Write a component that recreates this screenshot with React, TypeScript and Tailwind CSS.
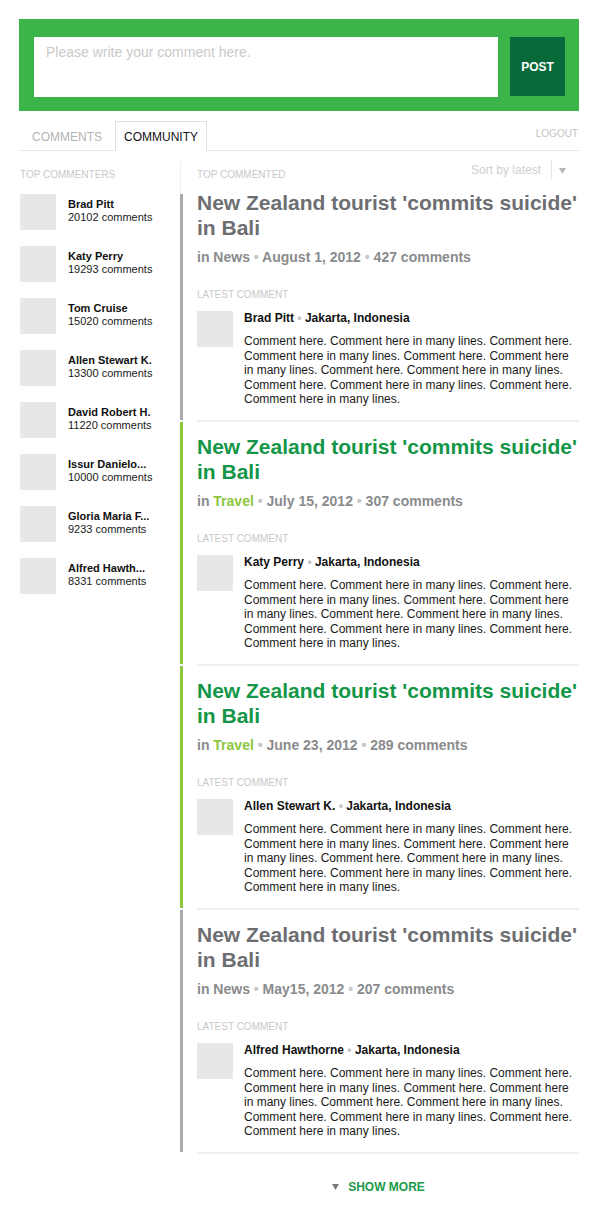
import React from "react";

const commenters = [
  { name: "Brad Pitt", count: "20102 comments" },
  { name: "Katy Perry", count: "19293 comments" },
  { name: "Tom Cruise", count: "15020 comments" },
  { name: "Allen Stewart K.", count: "13300 comments" },
  { name: "David Robert H.", count: "11220 comments" },
  { name: "Issur Danielo...", count: "10000 comments" },
  { name: "Gloria Maria F...", count: "9233 comments" },
  { name: "Alfred Hawth...", count: "8331 comments" },
];

type Article = {
  green: boolean;
  category: string;
  date: string;
  comments: string;
  author: string;
};

const articles: Article[] = [
  { green: false, category: "News", date: "August 1, 2012", comments: "427 comments", author: "Brad Pitt" },
  { green: true, category: "Travel", date: "July 15, 2012", comments: "307 comments", author: "Katy Perry" },
  { green: true, category: "Travel", date: "June 23, 2012", comments: "289 comments", author: "Allen Stewart K." },
  { green: false, category: "News", date: "May15, 2012", comments: "207 comments", author: "Alfred Hawthorne" },
];

const commentText = Array(6).fill("Comment here. Comment here in many lines.").join(" ");

function Dot() {
  return <span className="text-[#c8c8c8]"> • </span>;
}

function ArticleBlock({ a, first }: { a: Article; first: boolean }) {
  return (
    <>
      <div className="flex">
        <div className={`w-[3px] shrink-0 ${a.green ? "bg-[#8dc63f]" : "bg-[#a7a9ac]"}`} />
        <div className={`flex-1 pl-[14px] pb-[13.5px] ${first ? "pt-0" : "pt-[12px]"}`}>
          <h2
            className={`text-[21px] leading-[25px] font-bold ${first ? "-mt-[4px]" : ""} ${
              a.green ? "text-[#139647]" : "text-[#6d6e71]"
            }`}
          >
            New Zealand tourist 'commits suicide' in Bali
          </h2>
          <div className="mt-[9px] text-[14px] leading-[16px] font-bold text-[#8a8b8d]">
            in <span className={a.green ? "text-[#8dc63f]" : ""}>{a.category}</span>
            <Dot />
            {a.date}
            <Dot />
            {a.comments}
          </div>
          <div className="mt-[24px] text-[10px] leading-[11px] text-[#c8c9ca]">LATEST COMMENT</div>
          <div className="mt-[11px] flex gap-[11px]">
            <div className="w-[36px] h-[36px] bg-[#e6e7e8] shrink-0" />
            <div className="w-[330px]">
              <div className="text-[12px] leading-[14px] font-bold text-[#111]">
                {a.author}
                <Dot />
                Jakarta, Indonesia
              </div>
              <p className="mt-[9px] text-[12px] leading-[14.5px] text-[#1a1a1a]">{commentText}</p>
            </div>
          </div>
        </div>
      </div>
      <div className="ml-[17px] h-[2px] bg-[#eeeeee]" />
    </>
  );
}

export default function App() {
  return (
    <div className="w-[600px] min-h-[1208px] bg-white pl-[19px] pr-[21px] pt-[19px] font-['Liberation_Sans',Arial,sans-serif]">
      {/* comment box */}
      <div className="bg-[#3bb54a] h-[92px] pt-[18px] pl-[15px] pr-[14px] flex gap-[12px]">
        <div className="flex-1 h-[60px] bg-white pl-[12px] pt-[7px] text-[14px] leading-[16px] text-[#c9c9c9]">
          Please write your comment here.
        </div>
        <button className="w-[55px] h-[59px] bg-[#07683a] text-white text-[12px] font-bold">POST</button>
      </div>

      {/* tabs */}
      <div className="mt-[10px] flex items-end border-b border-[#e6e6e6] h-[30px]">
        <div className="h-[29px] px-[13px] pt-[9px] text-[12px] leading-[14px] text-[#b3b3b3]">COMMENTS</div>
        <div className="h-[30px] -mb-px px-[8px] pt-[8px] border-t border-l border-r border-[#e1e1e1] bg-white text-[12px] leading-[14px] text-[#111]">
          COMMUNITY
        </div>
        <div className="ml-auto self-start mt-[7px] mr-[1px] text-[10px] leading-[12px] text-[#c4c4c4]">LOGOUT</div>
      </div>

      {/* body */}
      <div className="mt-[11px] flex">
        <div className="w-[161px] shrink-0 pl-[1px]">
          <div className="pt-[7px] text-[10px] leading-[11px] text-[#c8c9ca]">TOP COMMENTERS</div>
          <div className="mt-[14px] flex flex-col gap-[16px]">
            {commenters.map((c) => (
              <div key={c.name} className="flex gap-[12px]">
                <div className="w-[36px] h-[36px] bg-[#e6e7e8] shrink-0" />
                <div className="pt-[4px]">
                  <div className="text-[11px] leading-[13px] font-bold text-[#111]">{c.name}</div>
                  <div className="text-[11px] leading-[13px] text-[#1a1a1a]">{c.count}</div>
                </div>
              </div>
            ))}
          </div>
        </div>

        <div className="flex-1">
          <div className="h-[32px] border-l border-[#eeeeee] pl-[16px] pr-[13px] flex items-start justify-between">
            <div className="mt-[7px] text-[10px] leading-[11px] text-[#c8c9ca]">TOP COMMENTED</div>
            <div className="flex items-start">
              <div className="mt-[1px] text-[12px] leading-[14px] text-[#cfcfcf]">Sort by latest</div>
              <div className="ml-[10px] -mt-[1px] w-px h-[19px] bg-[#e6e6e6]" />
              <svg className="ml-[7px] mt-[6px]" width="7" height="6" viewBox="0 0 7 6">
                <polygon points="0,0 7,0 3.5,6" fill="#b8b8b8" />
              </svg>
            </div>
          </div>

          {articles.map((a, i) => (
            <ArticleBlock key={i} a={a} first={i === 0} />
          ))}

          <div className="mt-[25px] pb-[10px] flex items-center justify-center gap-[9px] pr-[2px]">
            <svg width="7" height="6" viewBox="0 0 7 6">
              <polygon points="0,0 7,0 3.5,6" fill="#7a7a7a" />
            </svg>
            <span className="text-[12px] leading-[16px] font-bold text-[#1a9b4b]">SHOW MORE</span>
          </div>
        </div>
      </div>
    </div>
  );
}
